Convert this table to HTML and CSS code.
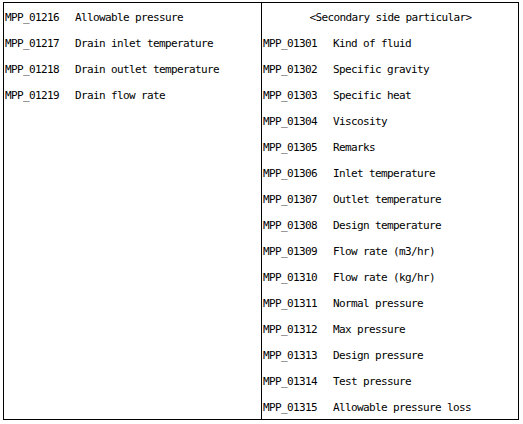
FILE: index.html
```html
<!DOCTYPE html>
<html lang="en">
<head>
  <meta charset="UTF-8">
  <title>Particulars</title>
  <link rel="stylesheet" href="styles.css">
</head>
<body>

<table class="sheet">
  <tr>
    <td class="col col-left">
      <div class="row"><span class="code">MPP_01216</span><span class="label">Allowable pressure</span></div>
      <div class="row"><span class="code">MPP_01217</span><span class="label">Drain inlet temperature</span></div>
      <div class="row"><span class="code">MPP_01218</span><span class="label">Drain outlet temperature</span></div>
      <div class="row"><span class="code">MPP_01219</span><span class="label">Drain flow rate</span></div>
    </td>
    <td class="col col-right">
      <div class="row heading">&lt;Secondary side particular&gt;</div>
      <div class="row"><span class="code">MPP_01301</span><span class="label">Kind of fluid</span></div>
      <div class="row"><span class="code">MPP_01302</span><span class="label">Specific gravity</span></div>
      <div class="row"><span class="code">MPP_01303</span><span class="label">Specific heat</span></div>
      <div class="row"><span class="code">MPP_01304</span><span class="label">Viscosity</span></div>
      <div class="row"><span class="code">MPP_01305</span><span class="label">Remarks</span></div>
      <div class="row"><span class="code">MPP_01306</span><span class="label">Inlet temperature</span></div>
      <div class="row"><span class="code">MPP_01307</span><span class="label">Outlet temperature</span></div>
      <div class="row"><span class="code">MPP_01308</span><span class="label">Design temperature</span></div>
      <div class="row"><span class="code">MPP_01309</span><span class="label">Flow rate (m3/hr)</span></div>
      <div class="row"><span class="code">MPP_01310</span><span class="label">Flow rate (kg/hr)</span></div>
      <div class="row"><span class="code">MPP_01311</span><span class="label">Normal pressure</span></div>
      <div class="row"><span class="code">MPP_01312</span><span class="label">Max pressure</span></div>
      <div class="row"><span class="code">MPP_01313</span><span class="label">Design pressure</span></div>
      <div class="row"><span class="code">MPP_01314</span><span class="label">Test pressure</span></div>
      <div class="row"><span class="code">MPP_01315</span><span class="label">Allowable pressure loss</span></div>
    </td>
  </tr>
</table>

</body>
</html>
```

FILE: styles.css
```css
* {
  box-sizing: border-box;
}

body {
  margin: 0;
  padding: 2px 0 0 3px;
  background: #fff;
  color: #000;
  font-family: "DejaVu Sans Mono", "Liberation Mono", monospace;
  font-size: 11px;
  letter-spacing: -0.62px;
}

.sheet {
  border-collapse: collapse;
  border: 1px solid #000;
  width: 516px;
  height: 418px;
}

.col {
  padding: 0;
  vertical-align: top;
  border: 1px solid #000;
}

.col-left {
  width: 258px;
}

.row {
  display: flex;
  height: 26px;
  padding: 2px 0 0 1px;
  line-height: 26px;
  white-space: nowrap;
}

.code {
  width: 70px;
  flex: none;
}

.heading {
  justify-content: center;
}
```
